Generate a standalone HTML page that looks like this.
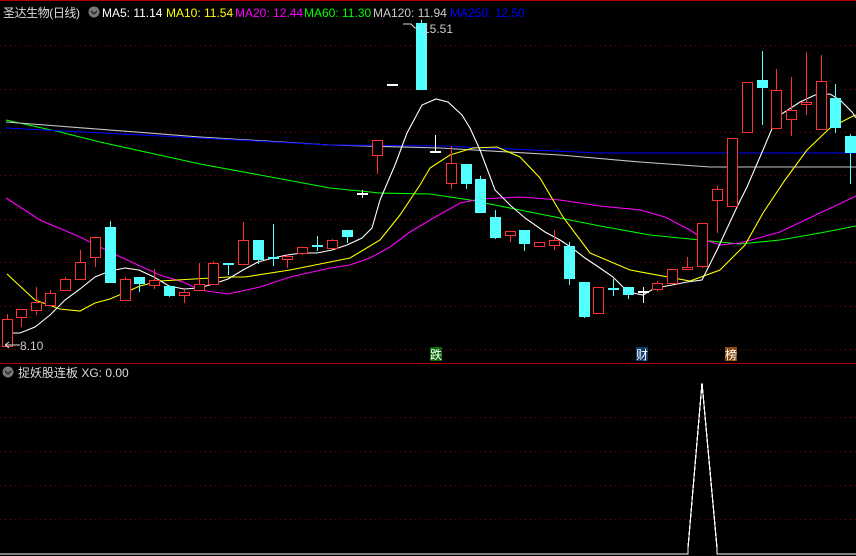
<!DOCTYPE html>
<html><head><meta charset="utf-8"><style>
body{margin:0;background:#000;width:856px;height:556px;overflow:hidden;font-family:"Liberation Sans","Noto Sans CJK SC",sans-serif}
svg{position:absolute;left:0;top:0}
</style></head><body>
<svg width="856" height="556" viewBox="0 0 856 556" shape-rendering="crispEdges">
<rect width="856" height="556" fill="#000"/>
<line x1="0" y1="0.5" x2="856" y2="0.5" stroke="#a00" />
<g stroke="#7a0000" stroke-dasharray="1 4">
<line x1="0" y1="45.5" x2="856" y2="45.5"/><line x1="0" y1="89.5" x2="856" y2="89.5"/>
<line x1="0" y1="132.5" x2="856" y2="132.5"/><line x1="0" y1="175.5" x2="856" y2="175.5"/>
<line x1="0" y1="219.5" x2="856" y2="219.5"/><line x1="0" y1="262.5" x2="856" y2="262.5"/>
<line x1="0" y1="306.5" x2="856" y2="306.5"/><line x1="0" y1="349.5" x2="856" y2="349.5"/>
<line x1="0" y1="417.5" x2="856" y2="417.5"/><line x1="0" y1="451.5" x2="856" y2="451.5"/>
<line x1="0" y1="485.5" x2="856" y2="485.5"/><line x1="0" y1="519.5" x2="856" y2="519.5"/>
</g>
<line x1="0" y1="363.5" x2="856" y2="363.5" stroke="#b00000"/>
<g fill="none" shape-rendering="auto" stroke-width="1.1">
<polyline stroke="#00ff00" points="6,120 60,132 100,142 200,164 260,175 330,188 380,193 430,194 470,200 520,210 560,218 600,226 650,235 700,240 740,244 780,240 820,233 856,226"/>
<polyline stroke="#c8c8c8" points="6,122 200,137 330,145 440,148 560,155 640,162 710,167 856,167"/>
<polyline stroke="#0000ff" points="6,128 200,138 330,145 440,146 600,153 856,153"/>
<polyline stroke="#ff00ff" points="6,198 40,220 80,237 110,252 140,266 160,275 183,282 200,290 228,294 260,287 290,277 330,268 350,265 370,258 390,247 410,232 430,220 460,203 480,199 520,197 560,200 600,206 640,210 665,217 690,230 705,240 720,245 740,243 780,232 820,213 856,196"/>
<polyline stroke="#ffff00" points="7,274 35,300 60,309 80,311 95,303 110,299 140,286 160,281 228,277 245,277 290,270 330,262 350,258 380,240 400,215 420,185 430,168 450,155 473,148 497,147 520,157 540,178 563,217 590,253 630,270 690,281 720,270 745,245 763,213 785,180 807,150 830,128 853,116 856,115"/>
<polyline stroke="#ffffff" points="7,333 20,333 35,327 50,315 65,300 80,289 95,277 110,271 125,268 139,270 154,277 169,286 184,289 199,288 213,284 228,279 243,270 258,262 273,258 287,255 302,253 317,253 332,250 347,245 362,238 372,228 380,200 395,165 407,133 422,105 436,99 448,102 462,115 470,128 480,150 495,190 510,205 525,218 545,232 560,240 572,248 585,258 600,268 613,277 628,292 643,295 655,288 672,285 687,282 702,280 717,250 737,207 747,187 763,150 777,117 800,102 815,95 830,94 840,100 852,112 856,118"/>
</g>
<g id="c"></g>
<polyline fill="none" stroke="#fff" stroke-width="1.3" points="0,554 688,554 688,548 702,383 717,548 717,554 856,554"/>
<g fill="none" stroke="#ddd" stroke-width="1" shape-rendering="auto">
<path d="M403,24 L411,24 L415,28 L419,28"/><path d="M5,345 L20,345 M5,345 L9,342 M5,345 L9,348"/>
</g>
<rect x="430" y="347" width="12" height="14" fill="#0a6a0a"/>
<rect x="636" y="347" width="12" height="14" fill="#0b3a6a"/>
<rect x="725" y="347" width="12" height="14" fill="#8a4a10"/>
<g font-size="12" fill="#fff" font-family="'Liberation Sans','Noto Sans CJK SC',sans-serif">
<text x="430" y="359">跌</text><text x="636" y="359">财</text><text x="725" y="359">榜</text>
</g>
<g font-size="12" font-family="'Liberation Sans','Noto Sans CJK SC',sans-serif">
<text x="3" y="17" fill="#ddd" textLength="77">圣达生物(日线)</text>
<circle cx="94" cy="12" r="5.5" fill="#777"/>
<text x="102" y="17" fill="#fff">MA5: 11.14</text>
<text x="166" y="17" fill="#ff0">MA10: 11.54</text>
<text x="235" y="17" fill="#f0f">MA20: 12.44</text>
<text x="304" y="17" fill="#0f0">MA60: 11.30</text>
<text x="373" y="17" fill="#ccc">MA120: 11.94</text>
<text x="450" y="17" fill="#00f">MA250: 12.50</text>
<text x="423" y="33" fill="#ccc">15.51</text>
<text x="20" y="350" fill="#ccc">8.10</text>
<circle cx="8" cy="372" r="5.5" fill="#777"/>
<text x="18" y="377" fill="#ddd">捉妖股连板 XG: 0.00</text>
</g>
<path d="M5,371 L8,374 L11,371 M91,11 L94,14 L97,11" stroke="#222" fill="none" stroke-width="1.3" shape-rendering="auto"/>
</svg>
<script>
var d=[
[7,'r',319,346,314,346],[21,'r',309,317,309,327],[36,'r',302,310,287,315],[50,'r',293,305,290,305],[65,'r',279,290,277,291],
[80,'r',262,279,250,279],[95,'r',237,257,237,267],[110,'c',227,283,221,283],[125,'r',279,300,277,300],[139,'c',277,284,277,292],
[154,'r',280,285,269,289],[169,'c',286,296,286,297],[184,'r',292,295,290,303],[199,'r',284,290,263,290],[213,'r',263,284,261,284],
[228,'c',263,264,263,275],[243,'r',240,264,222,264],[258,'c',240,260,240,264],[273,'c',257,258,224,266],[287,'r',256,259,254,268],
[302,'r',247,253,247,255],[317,'c',245,247,236,251],[332,'r',240,248,239,248],[347,'c',230,237,230,243],[362,'w',193,194,190,198],
[377,'r',140,155,140,174],[392,'w',84,85,84,85],[421,'c',23,90,20,90],[435,'w',151,152,135,151],[451,'r',163,183,146,189],
[466,'c',164,184,164,189],[480,'c',179,213,176,213],[495,'c',217,238,210,239],[510,'r',231,235,231,242],[524,'c',230,244,230,251],
[539,'r',242,246,242,246],[554,'r',240,245,230,250],[569,'c',246,279,242,285],[584,'c',282,317,282,318],[598,'r',287,313,287,313],
[613,'c',288,289,279,296],[628,'c',287,295,287,299],[643,'w',291,292,287,303],[657,'r',283,289,281,291],[672,'r',269,283,269,283],
[687,'r',267,269,257,269],[702,'r',223,266,223,268],[717,'r',189,200,186,233],[732,'r',138,206,138,206],[747,'r',82,132,82,132],
[762,'c',80,88,51,125],[776,'r',90,128,69,128],[791,'r',110,119,77,136],[806,'r',102,104,52,115],[821,'r',81,129,55,129],
[835,'c',98,128,84,133],[850,'c',136,153,134,184]];
var s='';
d.forEach(function(a){var x=a[0],t=a[1],b1=a[2],b2=a[3],w1=a[4],w2=a[5];
var col=t=='r'?'#ff3232':(t=='c'?'#54ffff':'#ffffff');
s+='<rect x="'+x+'" y="'+w1+'" width="1" height="'+Math.max(1,w2-w1)+'" fill="'+col+'"/>';
if(t=='r'){var h=Math.max(3,b2-b1+1);
 s+='<rect x="'+(x-5)+'" y="'+b1+'" width="11" height="'+h+'" fill="'+col+'"/>';
 s+='<rect x="'+(x-4)+'" y="'+(b1+1)+'" width="9" height="'+(h-2)+'" fill="#000"/>';}
else if(b2-b1<=1) s+='<rect x="'+(x-5)+'" y="'+b1+'" width="11" height="2" fill="'+col+'"/>';
else s+='<rect x="'+(x-5)+'" y="'+b1+'" width="11" height="'+(b2-b1)+'" fill="'+col+'"/>';});
document.getElementById('c').innerHTML=s;
</script>
</body></html>
